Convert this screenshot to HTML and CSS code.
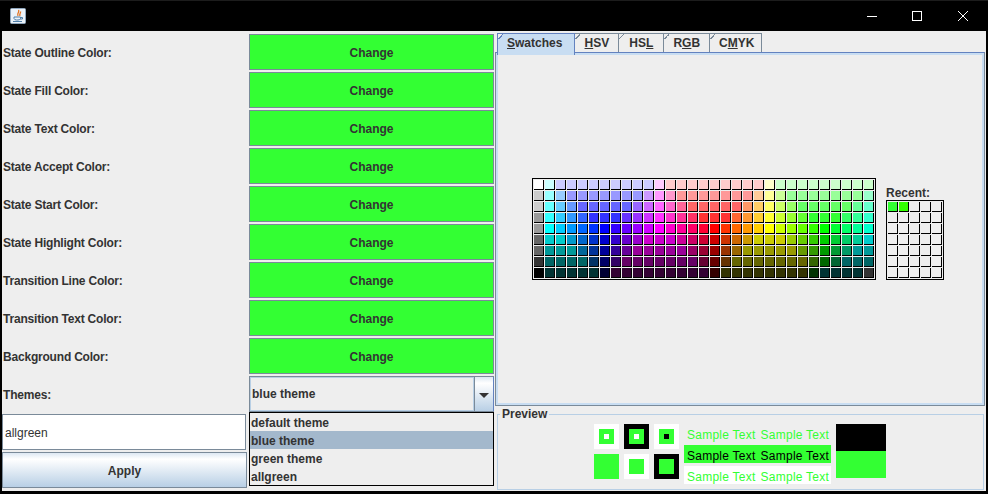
FILE: index.html
```html
<!DOCTYPE html>
<html lang="en">
<head>
  <meta charset="UTF-8">
  <title>Theme Editor</title>
  <link rel="stylesheet" href="styles.css">
</head>
<body>
  <div class="titlebar">
    <svg class="app-icon" width="16" height="16" viewBox="0 0 16 16">
      <rect x="0.5" y="0.5" width="15" height="15" rx="1" fill="#eaf1f8" stroke="#8fa6bd"/>
      <path d="M8.5 2 C10 4 6.5 5 8 8 M10.5 3.5 C11 5 9 6 10 8" fill="none" stroke="#e2701c" stroke-width="1.3"/>
      <path d="M4 9 H10.5 V10.5 Q10 12 8 12 H6.5 Q4.5 12 4 10.5 Z M10.5 9.5 H12.5 V11 H10" fill="none" stroke="#4f7ea8"/>
      <path d="M3 13.5 H12" stroke="#4f7ea8"/>
    </svg>
    <div class="win-controls">
      <span class="win-min"></span>
      <span class="win-max"></span>
      <svg class="win-close" width="10" height="10" viewBox="0 0 10 10">
        <path d="M0 0 L10 10 M10 0 L0 10" stroke="#fff" stroke-width="1"/>
      </svg>
    </div>
  </div>

  <div class="content">
    <div class="settings">
      <div class="field-label">State Outline Color:</div>
      <button class="color-btn">Change</button>
      <div class="field-label">State Fill Color:</div>
      <button class="color-btn">Change</button>
      <div class="field-label">State Text Color:</div>
      <button class="color-btn">Change</button>
      <div class="field-label">State Accept Color:</div>
      <button class="color-btn">Change</button>
      <div class="field-label">State Start Color:</div>
      <button class="color-btn">Change</button>
      <div class="field-label">State Highlight Color:</div>
      <button class="color-btn">Change</button>
      <div class="field-label">Transition Line Color:</div>
      <button class="color-btn">Change</button>
      <div class="field-label">Transition Text Color:</div>
      <button class="color-btn">Change</button>
      <div class="field-label">Background Color:</div>
      <button class="color-btn">Change</button>

      <div class="field-label">Themes:</div>
      <div class="combo">
        <div class="combo-value">blue theme</div>
        <div class="combo-arrow"><span class="arrow-down"></span></div>
        <ul class="combo-list">
          <li>default theme</li>
          <li class="selected">blue theme</li>
          <li>green theme</li>
          <li>allgreen</li>
        </ul>
      </div>

      <input class="name-input" type="text" value="allgreen">
      <div></div>
      <button class="apply-btn">Apply</button>
    </div>

    <div class="chooser">
      <div class="tabs">
        <div class="tab active"><u>S</u>watches</div>
        <div class="tab"><u>H</u>SV</div>
        <div class="tab tab-wide">HS<u>L</u></div>
        <div class="tab">R<u>G</u>B</div>
        <div class="tab tab-last">C<u>M</u>YK</div>
      </div>
      <div class="tab-body">
        <div class="swatches" id="swatches"></div>
        <div class="recent">
          <div class="recent-label">Recent:</div>
          <div class="recent-grid" id="recent"></div>
        </div>
      </div>

      <fieldset class="preview">
        <legend>Preview</legend>
        <div class="preview-row">
          <div class="states">
            <div class="sq sq-white"><div class="sq-mid"><div class="sq-dot white"></div></div></div>
            <div class="sq sq-black"><div class="sq-mid"><div class="sq-dot white"></div></div></div>
            <div class="sq sq-white"><div class="sq-mid"><div class="sq-dot black"></div></div></div>
            <div class="sq sq-green"></div>
            <div class="sq sq-white"><div class="sq-mid"></div></div>
            <div class="sq sq-black"><div class="sq-mid"></div></div>
          </div>
          <div class="samples">
            <div class="sample"><span>Sample Text</span><span>Sample Text</span></div>
            <div class="sample on-green"><span>Sample Text</span><span>Sample Text</span></div>
            <div class="sample on-white"><span>Sample Text</span><span>Sample Text</span></div>
          </div>
          <div class="old-new">
            <div class="old-color"></div>
            <div class="new-color"></div>
          </div>
        </div>
      </fieldset>
    </div>
  </div>

  <script src="app.js"></script>
</body>
</html>
```

FILE: styles.css
```css
* {
  box-sizing: border-box;
}
html, body {
  margin: 0;
  height: 494px;
  overflow: hidden;
}
body {
  background: #000;
  font-family: "Liberation Sans", Arial, sans-serif;
  font-size: 12px;
  color: #333;
}
.titlebar {
  height: 31px;
  display: flex;
  align-items: center;
  justify-content: space-between;
  padding: 0 20px 0 10px;
  border-top: 1px solid #1c1c1c;
}
.win-controls {
  display: flex;
  align-items: center;
  gap: 36px;
}
.win-min {
  width: 10px;
  height: 1px;
  margin-right: -1px;
  background: #fff;
}
.win-max {
  width: 10px;
  height: 10px;
  border: 1px solid #fff;
}
.win-close {
  display: block;
}
.content {
  margin: 0 2px;
  height: 460px;
  background: #eee;
  display: flex;
}

/* left side */
.settings {
  width: 492px;
  padding-top: 3px;
  display: grid;
  grid-template-columns: 245px 245px;
  grid-auto-rows: 36px;
  gap: 2px;
}
.field-label {
  display: flex;
  align-items: center;
  padding: 2px 0 0 1px;
  font-weight: bold;
  letter-spacing: -0.2px;
}
.color-btn, .apply-btn {
  font: bold 12px "Liberation Sans", Arial, sans-serif;
  color: #333;
  border: 1px solid #7a8a99;
  padding: 2px 0 0;
}
.color-btn {
  background: #33ff33;
}
.apply-btn {
  background: linear-gradient(#dde8f3 0, #fff 18%, #b8cfe5 100%);
}
.combo {
  position: relative;
  display: flex;
  border: 1px solid #7a8a99;
}
.combo-value {
  flex: 1;
  display: flex;
  align-items: center;
  padding-left: 1px;
  font-weight: bold;
  border: 1px solid #b8cfe5;
}
.combo-arrow {
  width: 20px;
  margin-right: -1px;
  border-left: 1px solid #7a8a99;
  border-right: 1px solid #6382bf;
  background: linear-gradient(#dde8f3 0, #fff 18%, #b8cfe5 100%);
  display: flex;
  align-items: center;
  justify-content: center;
}
.arrow-down {
  width: 0;
  height: 0;
  margin-top: 2px;
  border-left: 5px solid transparent;
  border-right: 5px solid transparent;
  border-top: 5px solid #333;
}
.combo-list {
  position: absolute;
  left: -1px;
  top: 35px;
  width: 245px;
  margin: 0;
  padding: 0;
  list-style: none;
  background: #eee;
  border: 1px solid #000;
  font-weight: bold;
}
.combo-list li {
  height: 18px;
  line-height: 20px;
  padding-left: 1px;
}
.combo-list .selected {
  background: #a3b8cc;
}
.name-input {
  width: 244px;
  font: 12px "Liberation Sans", Arial, sans-serif;
  color: #333;
  background: #fff;
  border: 1px solid #7a8a99;
  padding: 2px 2px 0;
  outline: none;
}

/* colour chooser */
.chooser {
  width: 490px;
  margin-left: 1px;
  padding-top: 2px;
}
.tabs {
  height: 19px;
  display: flex;
  padding-left: 2px;
  position: relative;
}
.tab {
  height: 19px;
  min-width: 44px;
  padding: 0 9px;
  text-align: center;
  line-height: 19px;
  font-weight: bold;
  background: #eee;
  border: 1px solid #7a8a99;
  border-bottom: none;
  border-left-width: 0;
  position: relative;
}
.tab-wide {
  min-width: 45px;
}
.tab-last {
  padding: 0 7px 0 9px;
}
.tab::before {
  content: "";
  position: absolute;
  left: 0;
  top: 0;
  width: 5px;
  height: 5px;
  background: linear-gradient(to bottom right, #eee 45%, #7a8a99 45%, #7a8a99 60%, #eee 60%);
}
.tab.active {
  height: 22px;
  margin-bottom: -3px;
  padding: 0 12px 0 9px;
  background: #c8ddf2;
  border-color: #6382bf;
  border-left-width: 1px;
  border-right-width: 1px;
  z-index: 1;
}
.tab.active::before {
  background: linear-gradient(to bottom right, #eee 45%, #6382bf 45%, #6382bf 60%, #c8ddf2 60%);
}
.tab-body {
  height: 354px;
  border: 1px solid #7a8a99;
  border-top-color: #6382bf;
  box-shadow: inset 0 0 0 2px #c8ddf2;
  display: flex;
  align-items: flex-end;
  justify-content: center;
  gap: 10px;
  padding: 0 4px 125px 0;
}
.swatches, .recent-grid {
  display: grid;
  grid-auto-rows: 10px;
  gap: 1px;
  padding: 1px;
  border: 1px solid #000;
}
.swatches {
  grid-template-columns: repeat(31, 10px);
}
.recent-grid {
  grid-template-columns: repeat(5, 10px);
}
.cell {
  border-right: 1px solid #000;
  border-bottom: 1px solid #000;
}
.recent-label {
  font-weight: bold;
}
.preview {
  height: 82px;
  margin: 2px 1px 0 2px;
  padding: 0;
  min-width: 0;
  border: 1px solid #b8cfe5;
}
.preview legend {
  margin-left: 2px;
  padding: 0 2px;
  font-weight: bold;
  line-height: 13px;
}
.preview-row {
  display: flex;
  justify-content: center;
  gap: 5px;
  padding: 3px 1px 0 0;
}
.states {
  display: grid;
  grid-template-columns: repeat(3, 25px);
  grid-auto-rows: 25px;
  gap: 5px;
}
.sq {
  display: flex;
  align-items: center;
  justify-content: center;
}
.sq-white {
  background: #fff;
}
.sq-black {
  background: #000;
}
.sq-green {
  background: #33ff33;
}
.sq-mid {
  width: 15px;
  height: 15px;
  background: #33ff33;
  display: flex;
  align-items: center;
  justify-content: center;
}
.sq-dot {
  width: 5px;
  height: 5px;
}
.sq-dot.white {
  background: #fff;
}
.sq-dot.black {
  background: #000;
}
.samples {
  width: 147px;
  display: flex;
  flex-direction: column;
  gap: 3px;
}
.sample {
  height: 18px;
  line-height: 22px;
  padding-left: 3px;
  display: flex;
  gap: 5px;
  color: #33ff33;
  letter-spacing: 0.25px;
  white-space: nowrap;
}
.sample.on-green {
  background: #33ff33;
  color: #000;
}
.sample.on-white {
  background: #fff;
}
.old-new {
  width: 50px;
}
.old-color, .new-color {
  height: 27px;
}
.old-color {
  background: #000;
}
.new-color {
  background: #33ff33;
}
```

FILE: app.js
```js
// swatch palette, each row is [colour, repeat] pairs
const PALETTE = [
  "fff cff ccf*9 fcf fcc*9 ffc cfc*9",
  "ccc 9ff 9cf 99f*7 c9f f9f f9c f99*7 fc9 ff9 cf9 9f9*7 9fc",
  "ccc 6ff 6cf 69f 66f*5 96f c6f f6f f6c f69 f66*5 f96 fc6 ff6 cf6 9f6 6f6*5 6f9 6fc",
  "999 3ff 3cf 39f 36f 33f*3 63f 93f c3f f3f f3c f39 f36 f33*3 f63 f93 fc3 ff3 cf3 9f3 6f3 3f3*3 3f6 3f9 3fc",
  "999 0ff 0cf 09f 06f 03f 00f 30f 60f 90f c0f f0f f0c f09 f06 f03 f00 f30 f60 f90 fc0 ff0 cf0 9f0 6f0 3f0 0f0 0f3 0f6 0f9 0fc",
  "666 0cc*2 09c 06c 03c 00c 30c 60c 90c c0c*3 c09 c06 c03 c00 c30 c60 c90 cc0*3 9c0 6c0 3c0 0c0 0c3 0c6 0c9 0cc",
  "666 099*3 069 039 009 309 609 909*5 906 903 900 930 960 990*5 690 390 090 093 096 099*2",
  "333 066*4 036 006 306 606*7 603 600 630 660*7 360 060 063 066*3",
  "000 033*5 003 303*9 300 330*8 030 033*4 333"
];

function addCell(parent, colour) {
  const cell = document.createElement("div");
  cell.className = "cell";
  cell.style.background = colour;
  parent.appendChild(cell);
}

const swatches = document.getElementById("swatches");
PALETTE.forEach(row => {
  row.split(" ").forEach(item => {
    const [hex, count] = item.split("*");
    for (let i = 0; i < (count || 1); i++) addCell(swatches, "#" + hex);
  });
});

const recent = document.getElementById("recent");
for (let i = 0; i < 35; i++) {
  addCell(recent, i === 0 ? "#33ff33" : i === 1 ? "#33ff00" : "#eeeeee");
}
```
